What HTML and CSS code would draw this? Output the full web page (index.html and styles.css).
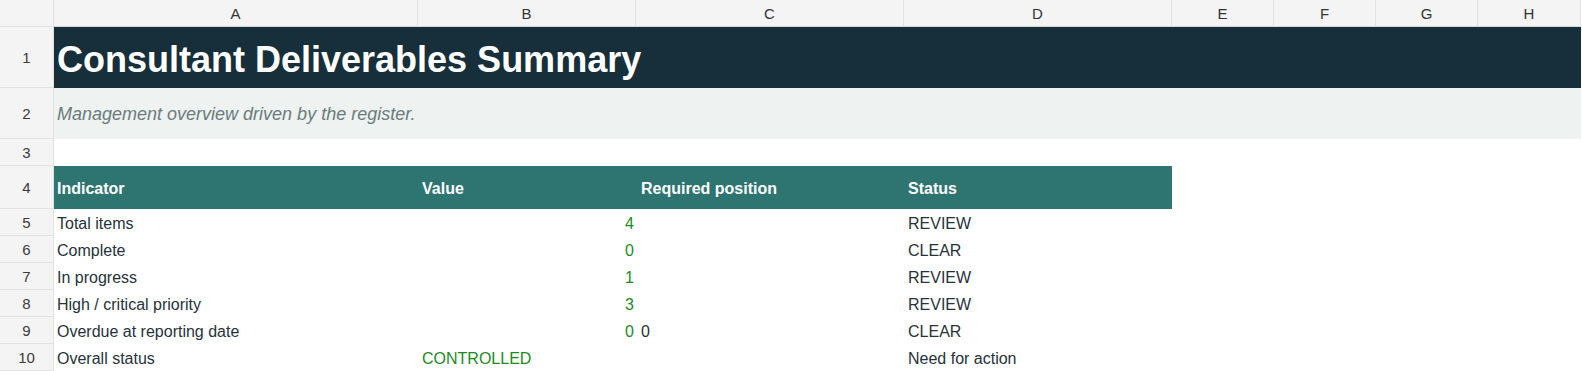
FILE: index.html
```html
<!DOCTYPE html>
<html lang="en">
<head>
<meta charset="utf-8">
<title>Consultant Deliverables Summary</title>
<link rel="stylesheet" href="styles.css">
</head>
<body>
<div class="sheet">
  <div class="corner"></div>
  <div class="colhead">A</div>
  <div class="colhead">B</div>
  <div class="colhead">C</div>
  <div class="colhead">D</div>
  <div class="colhead">E</div>
  <div class="colhead">F</div>
  <div class="colhead">G</div>
  <div class="colhead last">H</div>

  <div class="rowhead">1</div>
  <div class="title">Consultant Deliverables Summary</div>

  <div class="rowhead">2</div>
  <div class="subtitle">Management overview driven by the register.</div>

  <div class="rowhead">3</div>
  <div class="blank span8"></div>

  <div class="rowhead">4</div>
  <div class="th">Indicator</div>
  <div class="th colb">Value</div>
  <div class="th colc">Required position</div>
  <div class="th cold">Status</div>
  <div class="blank span4"></div>

  <div class="rowhead">5</div>
  <div class="cell">Total items</div>
  <div class="cell num">4</div>
  <div class="cell colc"></div>
  <div class="cell cold">REVIEW</div>
  <div class="blank span4"></div>

  <div class="rowhead">6</div>
  <div class="cell">Complete</div>
  <div class="cell num">0</div>
  <div class="cell colc"></div>
  <div class="cell cold">CLEAR</div>
  <div class="blank span4"></div>

  <div class="rowhead">7</div>
  <div class="cell">In progress</div>
  <div class="cell num">1</div>
  <div class="cell colc"></div>
  <div class="cell cold">REVIEW</div>
  <div class="blank span4"></div>

  <div class="rowhead">8</div>
  <div class="cell">High / critical priority</div>
  <div class="cell num">3</div>
  <div class="cell colc"></div>
  <div class="cell cold">REVIEW</div>
  <div class="blank span4"></div>

  <div class="rowhead">9</div>
  <div class="cell">Overdue at reporting date</div>
  <div class="cell num">0</div>
  <div class="cell colc">0</div>
  <div class="cell cold">CLEAR</div>
  <div class="blank span4"></div>

  <div class="rowhead">10</div>
  <div class="cell">Overall status</div>
  <div class="cell good colb">CONTROLLED</div>
  <div class="cell colc"></div>
  <div class="cell cold">Need for action</div>
  <div class="blank span4"></div>
</div>
</body>
</html>
```

FILE: styles.css
```css
html, body {
  margin: 0;
  padding: 0;
  background: #ffffff;
}

body {
  font-family: "Liberation Sans", Arial, sans-serif;
  color: #27323a;
  overflow: hidden;
}

.sheet {
  display: grid;
  grid-template-columns: 54px 364px 218px 268px 268px 102px 102px 102px 103px;
  grid-template-rows: 27px 61px 51px 27px 43px repeat(6, 27px);
  width: 1582px;
}

.corner,
.colhead,
.rowhead {
  box-sizing: border-box;
  background: #f4f4f4;
  border-right: 1px solid #e2e2e2;
  border-bottom: 1px solid #e2e2e2;
  color: #333333;
  font-size: 14px;
  display: flex;
  align-items: center;
  justify-content: center;
}

.colhead {
  border-bottom: 1px solid #d9d9d9;
  padding-top: 1px;
  font-size: 15px;
}

.rowhead {
  color: #3a3a3a;
  font-size: 15px;
  padding-top: 1px;
}

.title {
  grid-column: 2 / span 8;
  background: #172f3a;
  color: #ffffff;
  font-weight: bold;
  font-size: 36px;
  display: flex;
  align-items: center;
  padding-left: 3px;
  padding-top: 5px;
  box-sizing: border-box;
  white-space: nowrap;
}

.subtitle {
  grid-column: 2 / span 8;
  background: #eef2f1;
  color: #6b7b7b;
  font-style: italic;
  font-size: 18px;
  display: flex;
  align-items: center;
  padding-left: 3px;
  padding-top: 2px;
  box-sizing: border-box;
  white-space: nowrap;
}

.span8 {
  grid-column: 2 / span 8;
}

.span4 {
  grid-column: 6 / span 4;
}

.th {
  background: #2e7470;
  color: #ffffff;
  font-weight: bold;
  font-size: 16px;
  display: flex;
  align-items: center;
  padding-left: 3px;
  padding-top: 3px;
  box-sizing: border-box;
  white-space: nowrap;
}

.cell {
  font-size: 16px;
  display: flex;
  align-items: center;
  padding-left: 3px;
  padding-top: 2px;
  box-sizing: border-box;
  white-space: nowrap;
}

.colb {
  padding-left: 4px;
}

.colc {
  padding-left: 5px;
}

.cold {
  padding-left: 4px;
}

.num {
  justify-content: flex-end;
  padding-left: 0;
  padding-right: 2px;
  color: #1e8a1e;
}

.good {
  color: #1e8a1e;
}
```
